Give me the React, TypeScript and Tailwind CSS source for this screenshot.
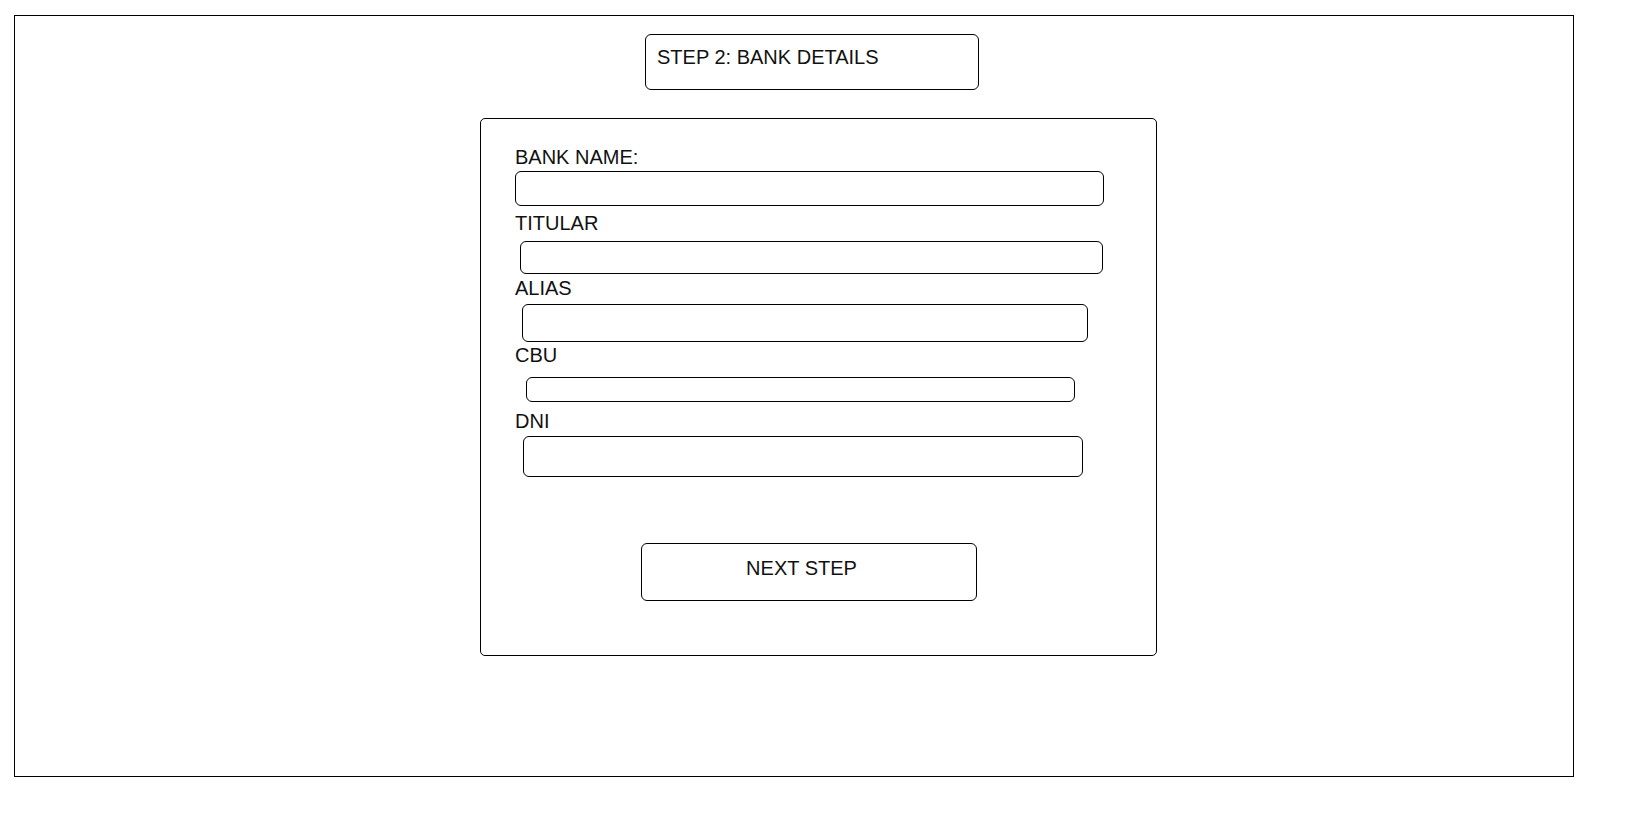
const fields = [
    { label: "BANK NAME:", box: "ml-0 w-[589px] h-[35px] mt-[2px]", gap: "mt-0" },
    { label: "TITULAR", box: "ml-[5px] w-[583px] h-[33px] mt-[6px]", gap: "mt-[6px]" },
    { label: "ALIAS", box: "ml-[7px] w-[566px] h-[38px] mt-[4px]", gap: "mt-[3px]" },
    { label: "CBU", box: "ml-[11px] w-[549px] h-[25px] mt-[10px]", gap: "mt-[2px]" },
    { label: "DNI", box: "ml-[8px] w-[560px] h-[41px] mt-[3px]", gap: "mt-[8px]" },
];

export default function App() {
    return (
        <div className="min-h-screen bg-white pt-[15px] pl-[14px] font-['Liberation_Sans',Arial,sans-serif] text-[#111]">
            <div className="w-[1560px] h-[762px] border border-black">
                {/* Step header */}
                <div className="ml-[630px] mt-[18px] w-[334px] h-[56px] border border-black rounded-md pl-[11px] pt-[11px] text-[20px] leading-[23px]">
                    STEP 2: BANK DETAILS
                </div>

                {/* Form panel */}
                <div className="ml-[465px] mt-[28px] w-[677px] h-[538px] border border-black rounded-[5px] pl-[34px] pt-[27px]">
                    {fields.map((f) => (
                        <div key={f.label} className={f.gap}>
                            <label className="block text-[20px] leading-[23px]">{f.label}</label>
                            <input
                                type="text"
                                className={`block border border-black rounded-md bg-white outline-none ${f.box}`}
                            />
                        </div>
                    ))}

                    <button
                        type="button"
                        className="flex items-start justify-center ml-[126px] mt-[66px] w-[336px] h-[58px] border border-black rounded-md bg-white pt-[13px] pr-[15px] text-[20px] leading-[23px]"
                    >
                        NEXT STEP
                    </button>
                </div>
            </div>
        </div>
    );
}
